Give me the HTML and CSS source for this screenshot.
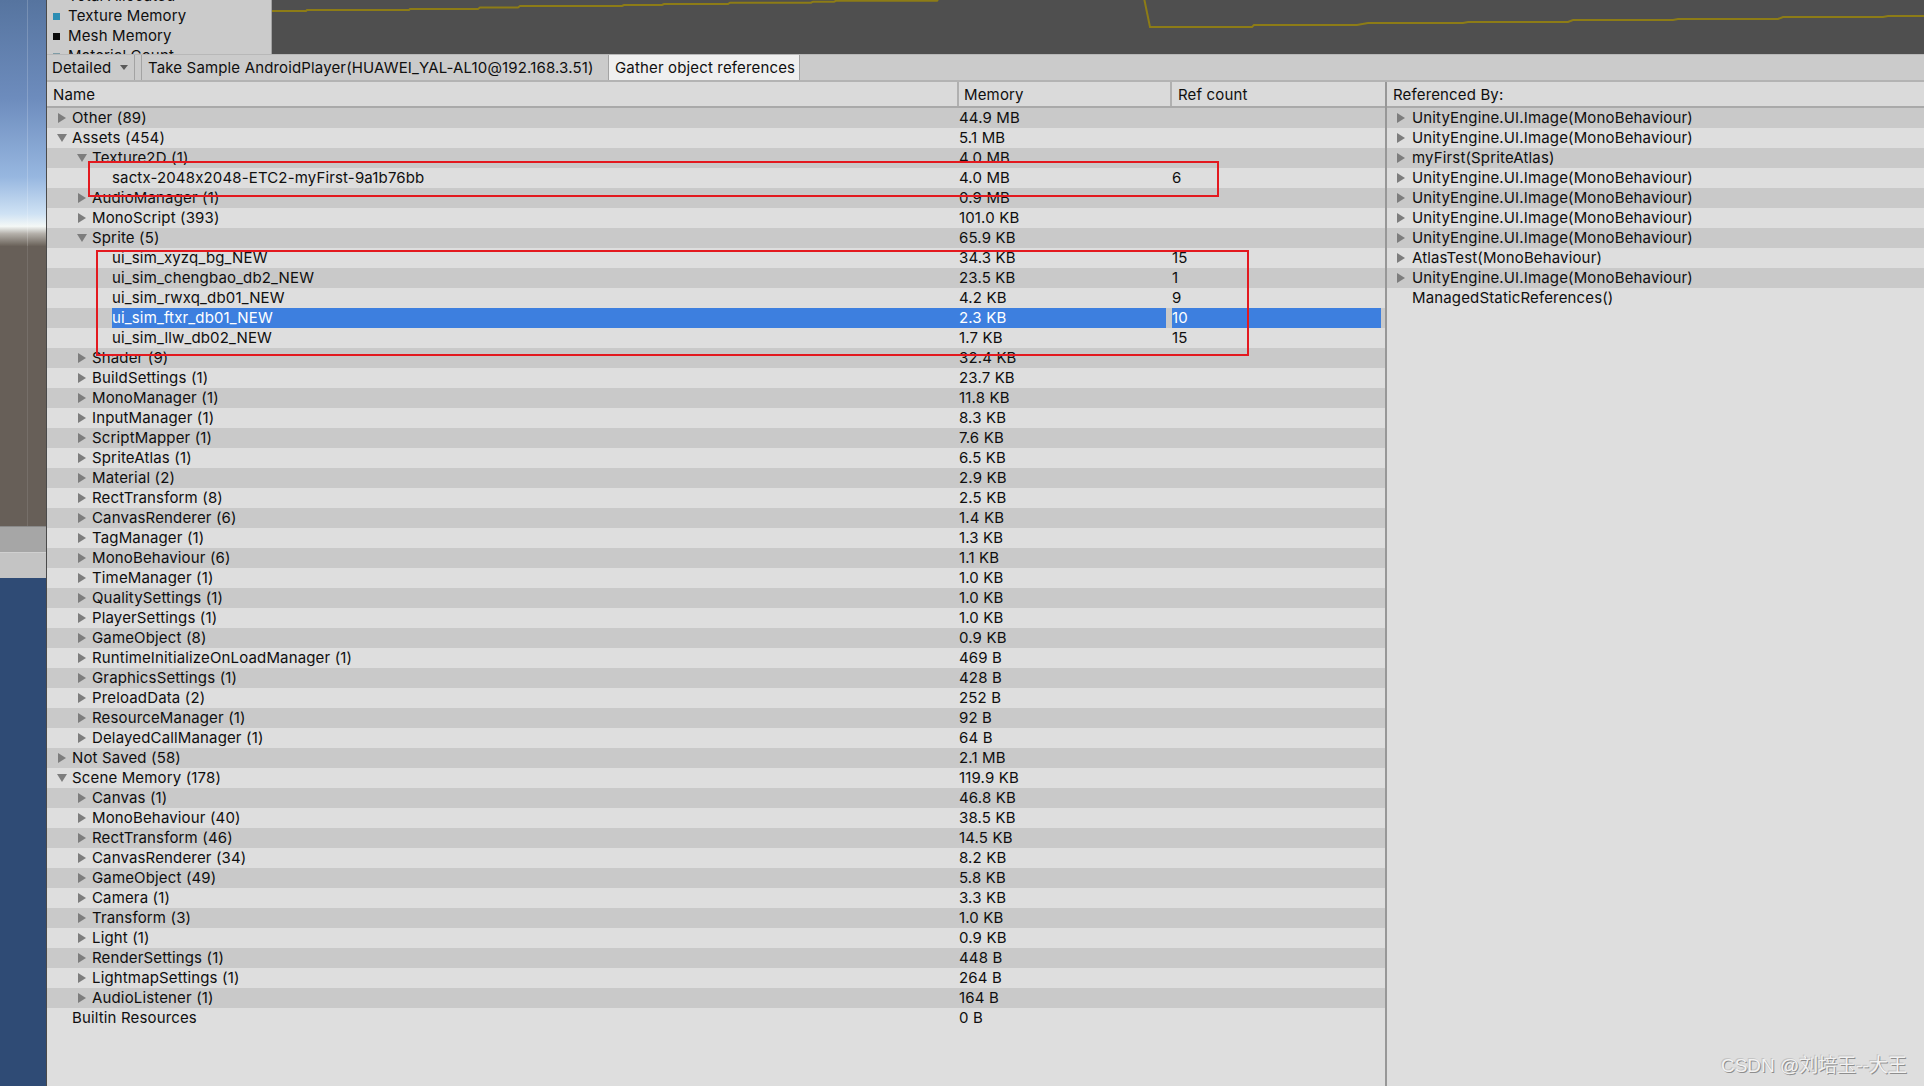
FILE: index.html
```html
<!DOCTYPE html>
<html>
<head>
<meta charset="utf-8">
<link rel="stylesheet" href="styles.css">
</head>
<body>
<div class="app">
  <div class="scene">
    <div class="sky"></div>
    <div class="ground"></div>
    <div class="band1"></div>
    <div class="band2"></div>
    <div class="deep"></div>
  </div>
  <div class="profiler">
    <div class="chart">
      <div class="legend">
        <div class="lg-item"><span class="sw sw-total"></span>Total Allocated</div>
        <div class="lg-item"><span class="sw sw-tex"></span>Texture Memory</div>
        <div class="lg-item"><span class="sw sw-mesh"></span>Mesh Memory</div>
        <div class="lg-item"><span class="sw sw-mat"></span>Material Count</div>
      </div>
      <div class="graph">
        <svg width="1652" height="54" viewBox="272 0 1652 54">
          <polyline fill="none" stroke="#8d7c16" stroke-width="2" points="272,11 306,11 307,10 409,10 410,9 478,9 480,7.5 518,7.5 520,6 622,6 624,5 662,5 664,4 728,4 730,2.7 811,2.7 813,1.7 834,1.7 836,0.8 937,0.8 939,-2"/>
          <polyline fill="none" stroke="#8d7c16" stroke-width="2" points="1144,-2 1150,27 1252,27 1254,25 1357,25 1368,23 1463,23 1468,22 1568,22 1573,20 1673,20 1678,19 1778,19 1783,17 1883,17 1888,16 1924,16"/>
        </svg>
      </div>
    </div>
    <div class="toolbar">
      <div class="dropdown">Detailed<span class="dd-arrow"></span></div>
      <div class="tb-gap"></div>
      <div class="tb-btn">Take Sample AndroidPlayer(HUAWEI_YAL-AL10@192.168.3.51)</div>
      <div class="tb-btn on">Gather object references</div>
    </div>
    <div class="tables">
      <div class="tree">
        <div class="thead">
          <div class="th th-name">Name</div>
          <div class="th th-mem">Memory</div>
          <div class="th th-ref">Ref count</div>
        </div>
        <div class="rows">
          <div class="row alt"><span class="ind l0"></span><span class="arr r"></span><span class="nm">Other (89)</span><span class="mem">44.9 MB</span><span class="gap"></span><span class="ref"></span></div>
          <div class="row"><span class="ind l0"></span><span class="arr d"></span><span class="nm">Assets (454)</span><span class="mem">5.1 MB</span><span class="gap"></span><span class="ref"></span></div>
          <div class="row alt"><span class="ind l1"></span><span class="arr d"></span><span class="nm">Texture2D (1)</span><span class="mem">4.0 MB</span><span class="gap"></span><span class="ref"></span></div>
          <div class="row"><span class="ind l2"></span><span class="arr"></span><span class="nm">sactx-2048x2048-ETC2-myFirst-9a1b76bb</span><span class="mem">4.0 MB</span><span class="gap"></span><span class="ref">6</span></div>
          <div class="row alt"><span class="ind l1"></span><span class="arr r"></span><span class="nm">AudioManager (1)</span><span class="mem">0.9 MB</span><span class="gap"></span><span class="ref"></span></div>
          <div class="row"><span class="ind l1"></span><span class="arr r"></span><span class="nm">MonoScript (393)</span><span class="mem">101.0 KB</span><span class="gap"></span><span class="ref"></span></div>
          <div class="row alt"><span class="ind l1"></span><span class="arr d"></span><span class="nm">Sprite (5)</span><span class="mem">65.9 KB</span><span class="gap"></span><span class="ref"></span></div>
          <div class="row"><span class="ind l2"></span><span class="arr"></span><span class="nm">ui_sim_xyzq_bg_NEW</span><span class="mem">34.3 KB</span><span class="gap"></span><span class="ref">15</span></div>
          <div class="row alt"><span class="ind l2"></span><span class="arr"></span><span class="nm">ui_sim_chengbao_db2_NEW</span><span class="mem">23.5 KB</span><span class="gap"></span><span class="ref">1</span></div>
          <div class="row"><span class="ind l2"></span><span class="arr"></span><span class="nm">ui_sim_rwxq_db01_NEW</span><span class="mem">4.2 KB</span><span class="gap"></span><span class="ref">9</span></div>
          <div class="row alt sel"><span class="ind l2"></span><span class="arr"></span><span class="nm">ui_sim_ftxr_db01_NEW</span><span class="mem">2.3 KB</span><span class="gap"></span><span class="ref">10</span></div>
          <div class="row"><span class="ind l2"></span><span class="arr"></span><span class="nm">ui_sim_llw_db02_NEW</span><span class="mem">1.7 KB</span><span class="gap"></span><span class="ref">15</span></div>
          <div class="row alt"><span class="ind l1"></span><span class="arr r"></span><span class="nm">Shader (9)</span><span class="mem">32.4 KB</span><span class="gap"></span><span class="ref"></span></div>
          <div class="row"><span class="ind l1"></span><span class="arr r"></span><span class="nm">BuildSettings (1)</span><span class="mem">23.7 KB</span><span class="gap"></span><span class="ref"></span></div>
          <div class="row alt"><span class="ind l1"></span><span class="arr r"></span><span class="nm">MonoManager (1)</span><span class="mem">11.8 KB</span><span class="gap"></span><span class="ref"></span></div>
          <div class="row"><span class="ind l1"></span><span class="arr r"></span><span class="nm">InputManager (1)</span><span class="mem">8.3 KB</span><span class="gap"></span><span class="ref"></span></div>
          <div class="row alt"><span class="ind l1"></span><span class="arr r"></span><span class="nm">ScriptMapper (1)</span><span class="mem">7.6 KB</span><span class="gap"></span><span class="ref"></span></div>
          <div class="row"><span class="ind l1"></span><span class="arr r"></span><span class="nm">SpriteAtlas (1)</span><span class="mem">6.5 KB</span><span class="gap"></span><span class="ref"></span></div>
          <div class="row alt"><span class="ind l1"></span><span class="arr r"></span><span class="nm">Material (2)</span><span class="mem">2.9 KB</span><span class="gap"></span><span class="ref"></span></div>
          <div class="row"><span class="ind l1"></span><span class="arr r"></span><span class="nm">RectTransform (8)</span><span class="mem">2.5 KB</span><span class="gap"></span><span class="ref"></span></div>
          <div class="row alt"><span class="ind l1"></span><span class="arr r"></span><span class="nm">CanvasRenderer (6)</span><span class="mem">1.4 KB</span><span class="gap"></span><span class="ref"></span></div>
          <div class="row"><span class="ind l1"></span><span class="arr r"></span><span class="nm">TagManager (1)</span><span class="mem">1.3 KB</span><span class="gap"></span><span class="ref"></span></div>
          <div class="row alt"><span class="ind l1"></span><span class="arr r"></span><span class="nm">MonoBehaviour (6)</span><span class="mem">1.1 KB</span><span class="gap"></span><span class="ref"></span></div>
          <div class="row"><span class="ind l1"></span><span class="arr r"></span><span class="nm">TimeManager (1)</span><span class="mem">1.0 KB</span><span class="gap"></span><span class="ref"></span></div>
          <div class="row alt"><span class="ind l1"></span><span class="arr r"></span><span class="nm">QualitySettings (1)</span><span class="mem">1.0 KB</span><span class="gap"></span><span class="ref"></span></div>
          <div class="row"><span class="ind l1"></span><span class="arr r"></span><span class="nm">PlayerSettings (1)</span><span class="mem">1.0 KB</span><span class="gap"></span><span class="ref"></span></div>
          <div class="row alt"><span class="ind l1"></span><span class="arr r"></span><span class="nm">GameObject (8)</span><span class="mem">0.9 KB</span><span class="gap"></span><span class="ref"></span></div>
          <div class="row"><span class="ind l1"></span><span class="arr r"></span><span class="nm">RuntimeInitializeOnLoadManager (1)</span><span class="mem">469 B</span><span class="gap"></span><span class="ref"></span></div>
          <div class="row alt"><span class="ind l1"></span><span class="arr r"></span><span class="nm">GraphicsSettings (1)</span><span class="mem">428 B</span><span class="gap"></span><span class="ref"></span></div>
          <div class="row"><span class="ind l1"></span><span class="arr r"></span><span class="nm">PreloadData (2)</span><span class="mem">252 B</span><span class="gap"></span><span class="ref"></span></div>
          <div class="row alt"><span class="ind l1"></span><span class="arr r"></span><span class="nm">ResourceManager (1)</span><span class="mem">92 B</span><span class="gap"></span><span class="ref"></span></div>
          <div class="row"><span class="ind l1"></span><span class="arr r"></span><span class="nm">DelayedCallManager (1)</span><span class="mem">64 B</span><span class="gap"></span><span class="ref"></span></div>
          <div class="row alt"><span class="ind l0"></span><span class="arr r"></span><span class="nm">Not Saved (58)</span><span class="mem">2.1 MB</span><span class="gap"></span><span class="ref"></span></div>
          <div class="row"><span class="ind l0"></span><span class="arr d"></span><span class="nm">Scene Memory (178)</span><span class="mem">119.9 KB</span><span class="gap"></span><span class="ref"></span></div>
          <div class="row alt"><span class="ind l1"></span><span class="arr r"></span><span class="nm">Canvas (1)</span><span class="mem">46.8 KB</span><span class="gap"></span><span class="ref"></span></div>
          <div class="row"><span class="ind l1"></span><span class="arr r"></span><span class="nm">MonoBehaviour (40)</span><span class="mem">38.5 KB</span><span class="gap"></span><span class="ref"></span></div>
          <div class="row alt"><span class="ind l1"></span><span class="arr r"></span><span class="nm">RectTransform (46)</span><span class="mem">14.5 KB</span><span class="gap"></span><span class="ref"></span></div>
          <div class="row"><span class="ind l1"></span><span class="arr r"></span><span class="nm">CanvasRenderer (34)</span><span class="mem">8.2 KB</span><span class="gap"></span><span class="ref"></span></div>
          <div class="row alt"><span class="ind l1"></span><span class="arr r"></span><span class="nm">GameObject (49)</span><span class="mem">5.8 KB</span><span class="gap"></span><span class="ref"></span></div>
          <div class="row"><span class="ind l1"></span><span class="arr r"></span><span class="nm">Camera (1)</span><span class="mem">3.3 KB</span><span class="gap"></span><span class="ref"></span></div>
          <div class="row alt"><span class="ind l1"></span><span class="arr r"></span><span class="nm">Transform (3)</span><span class="mem">1.0 KB</span><span class="gap"></span><span class="ref"></span></div>
          <div class="row"><span class="ind l1"></span><span class="arr r"></span><span class="nm">Light (1)</span><span class="mem">0.9 KB</span><span class="gap"></span><span class="ref"></span></div>
          <div class="row alt"><span class="ind l1"></span><span class="arr r"></span><span class="nm">RenderSettings (1)</span><span class="mem">448 B</span><span class="gap"></span><span class="ref"></span></div>
          <div class="row"><span class="ind l1"></span><span class="arr r"></span><span class="nm">LightmapSettings (1)</span><span class="mem">264 B</span><span class="gap"></span><span class="ref"></span></div>
          <div class="row alt"><span class="ind l1"></span><span class="arr r"></span><span class="nm">AudioListener (1)</span><span class="mem">164 B</span><span class="gap"></span><span class="ref"></span></div>
          <div class="row"><span class="ind l0"></span><span class="arr"></span><span class="nm">Builtin Resources</span><span class="mem">0 B</span><span class="gap"></span><span class="ref"></span></div>
        </div>
      </div>
      <div class="refs">
        <div class="thead"><div class="th th-refby">Referenced By:</div></div>
        <div class="rows">
          <div class="rrow alt"><span class="rarr"></span><span>UnityEngine.UI.Image(MonoBehaviour)</span></div>
          <div class="rrow"><span class="rarr"></span><span>UnityEngine.UI.Image(MonoBehaviour)</span></div>
          <div class="rrow alt"><span class="rarr"></span><span>myFirst(SpriteAtlas)</span></div>
          <div class="rrow"><span class="rarr"></span><span>UnityEngine.UI.Image(MonoBehaviour)</span></div>
          <div class="rrow alt"><span class="rarr"></span><span>UnityEngine.UI.Image(MonoBehaviour)</span></div>
          <div class="rrow"><span class="rarr"></span><span>UnityEngine.UI.Image(MonoBehaviour)</span></div>
          <div class="rrow alt"><span class="rarr"></span><span>UnityEngine.UI.Image(MonoBehaviour)</span></div>
          <div class="rrow"><span class="rarr"></span><span>AtlasTest(MonoBehaviour)</span></div>
          <div class="rrow alt"><span class="rarr"></span><span>UnityEngine.UI.Image(MonoBehaviour)</span></div>
          <div class="rrow"><span class="rarr none"></span><span>ManagedStaticReferences()</span></div>
        </div>
      </div>
    </div>
  </div>
  <div class="mark mark1"></div>
  <div class="mark mark2"></div>
  <div class="watermark">CSDN @刘培玉--大王</div>
</div>
</body>
</html>
```

FILE: styles.css
```css
* { box-sizing: border-box; }
html, body { margin: 0; padding: 0; }
body {
  width: 1924px;
  height: 1086px;
  overflow: hidden;
  font-family: "Inter", "Noto Sans", "Liberation Sans", sans-serif;
  font-size: 15px;
  letter-spacing: 0.15px;
  font-feature-settings: "calt" 0;
  color: #0f0f0f;
  background: #dedede;
}
.app {
  position: relative;
  display: flex;
  width: 1924px;
  height: 1086px;
  overflow: hidden;
}

/* left scene strip */
.scene {
  width: 47px;
  flex: none;
  display: flex;
  flex-direction: column;
  border-right: 1px solid #4a4a4a;
}
.sky {
  height: 246px;
  background:
    linear-gradient(to right, transparent 27px, rgba(255,255,255,0.18) 27px, rgba(255,255,255,0.18) 28px, transparent 28px),
    linear-gradient(to bottom, #56749f 0%, #6d8cbd 40%, #97b7e0 72%, #cfe2f4 87%, #f4f8f6 92%, #b4b0aa 95%, #6a625a 100%);
}
.ground {
  height: 280px;
  background:
    linear-gradient(to right, transparent 27px, rgba(255,255,255,0.1) 27px, rgba(255,255,255,0.1) 28px, transparent 28px),
    #675f58;
}
.band1 { height: 26px; background: #a6a6a6; border-top: 1px solid #8a8a8a; }
.band2 { height: 26px; background: #c4c4c4; border-top: 1px solid #d0d0d0; }
.deep { flex: 1; background: #2f4b75; }

/* profiler */
.profiler {
  flex: 1;
  display: flex;
  flex-direction: column;
  min-width: 0;
}
.chart {
  height: 54px;
  flex: none;
  display: flex;
  overflow: hidden;
}
.legend {
  width: 225px;
  flex: none;
  background: #cbcbcb;
  border-right: 1px solid #a2a2a2;
  overflow: hidden;
  padding-left: 6px;
}
.lg-item {
  height: 20px;
  line-height: 20px;
  display: flex;
  align-items: center;
  white-space: nowrap;
}
.lg-item:first-child { margin-top: -14px; }
.sw {
  width: 7px;
  height: 7px;
  margin-right: 8px;
  flex: none;
}
.sw-total { background: #7e7e7e; }
.sw-tex { background: #2c8db3; }
.sw-mesh { background: #0a0a0a; }
.sw-mat { background: #7e9ca6; }
.graph {
  flex: 1;
  background: #4f4f4f;
  overflow: hidden;
}
.graph svg { display: block; }

.toolbar {
  height: 28px;
  flex: none;
  display: flex;
  background: #cbcbcb;
  border-top: 1px solid #b8b8b8;
  border-bottom: 2px solid #b3b3b3;
  white-space: nowrap;
}
.dropdown {
  width: 88px;
  display: flex;
  align-items: center;
  padding-left: 5px;
  border-right: 1px solid #a3a3a3;
}
.dd-arrow {
  margin-left: 9px;
  width: 0;
  height: 0;
  border-left: 4px solid transparent;
  border-right: 4px solid transparent;
  border-top: 5px solid #5a5a5a;
}
.tb-gap { width: 6px; }
.tb-btn {
  display: flex;
  align-items: center;
  padding: 0 6px;
  border-left: 1px solid #a3a3a3;
  border-right: 1px solid #a3a3a3;
  width: 468px;
  overflow: hidden;
}
.tb-btn.on {
  width: 191px;
  border-left: none;
  background: #efefef;
}

.tables {
  flex: 1;
  display: flex;
  min-height: 0;
}
.tree {
  width: 1338px;
  flex: none;
  background: #dedede;
}
.thead {
  height: 26px;
  display: flex;
  background: #dadada;
  border-bottom: 2px solid #a9a9a9;
}
.th {
  display: flex;
  align-items: center;
  white-space: nowrap;
}
.th-name { width: 912px; padding-left: 6px; border-right: 2px solid #b0b0b0; }
.th-mem { width: 213px; padding-left: 5px; border-right: 2px solid #b0b0b0; }
.th-ref { flex: 1; padding-left: 6px; }
.th-refby { padding-left: 6px; }

.row {
  height: 20px;
  line-height: 20px;
  display: flex;
  padding-right: 4px;
  white-space: nowrap;
}
.row.alt, .rrow.alt { background: #c9c9c9; }
.ind { flex: none; }
.ind.l0 { width: 11px; }
.ind.l1 { width: 31px; }
.ind.l2 { width: 51px; }
.arr {
  width: 14px;
  flex: none;
  display: flex;
  align-items: center;
}
.arr.r::before, .rarr::before {
  content: "";
  width: 0;
  height: 0;
  border-top: 5px solid transparent;
  border-bottom: 5px solid transparent;
  border-left: 8px solid #7d7d7d;
  margin-top: -1px;
}
.arr.d::before {
  content: "";
  width: 0;
  height: 0;
  margin-left: -1px;
  border-left: 5px solid transparent;
  border-right: 5px solid transparent;
  border-top: 8px solid #7d7d7d;
}
.nm { flex: 1; overflow: hidden; }
.mem { width: 207px; flex: none; }
.gap { width: 6px; flex: none; }
.ref { width: 209px; flex: none; }
.row.sel .nm, .row.sel .mem, .row.sel .ref {
  background: #3d7fdf;
  color: #ffffff;
}

.refs {
  flex: 1;
  background: #dedede;
  border-left: 2px solid #979797;
}
.rrow {
  height: 20px;
  line-height: 20px;
  display: flex;
  align-items: center;
  padding-left: 10px;
  white-space: nowrap;
}
.rarr {
  width: 15px;
  flex: none;
  display: flex;
  align-items: center;
  height: 20px;
}
.rarr.none::before { display: none; }

/* annotation overlays */
.mark {
  position: absolute;
  border: 2px solid #e3191f;
  pointer-events: none;
}
.mark1 { left: 88px; top: 161px; width: 1131px; height: 36px; }
.mark2 { left: 96px; top: 250px; width: 1153px; height: 106px; }

.watermark {
  position: absolute;
  right: 17px;
  bottom: 9px;
  font-family: "Liberation Sans", "Noto Sans CJK SC", sans-serif;
  font-size: 19px;
  letter-spacing: 0;
  color: #f2f2f2;
  text-shadow: 1px 1px 0 #8e8e8e, -1px -1px 0 #c4c4c4;
  white-space: nowrap;
}
```
